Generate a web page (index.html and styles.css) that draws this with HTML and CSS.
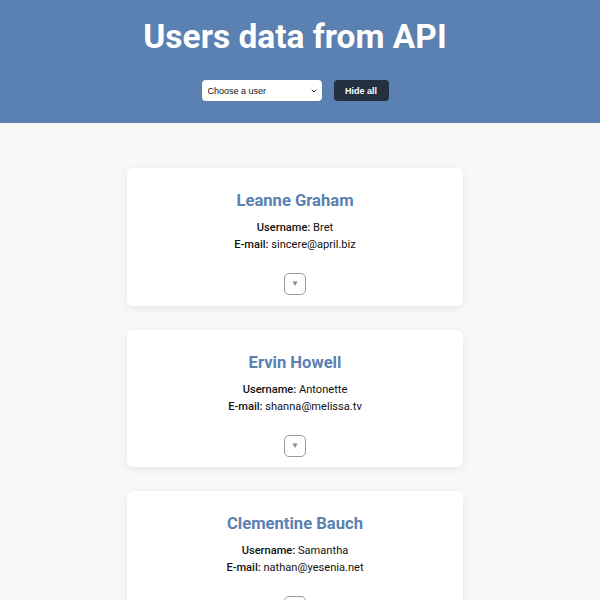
FILE: index.html
```html
<!DOCTYPE html>
<html>
<head>
<meta charset="utf-8">
<link rel="stylesheet" href="styles.css">
</head>
<body>
<header class="header">
  <h1 class="title">Users data from API</h1>
  <div class="controls">
    <select class="select"><option>Choose a user</option></select>
    <button class="hide-btn">Hide all</button>
  </div>
</header>
<main class="list">
  <div class="card">
    <h2 class="name">Leanne Graham</h2>
    <p class="line"><b>Username:</b> Bret</p>
    <p class="line"><b>E-mail:</b> sincere@april.biz</p>
    <button class="toggle">&#9660;</button>
  </div>
  <div class="card">
    <h2 class="name">Ervin Howell</h2>
    <p class="line"><b>Username:</b> Antonette</p>
    <p class="line"><b>E-mail:</b> shanna@melissa.tv</p>
    <button class="toggle">&#9660;</button>
  </div>
  <div class="card">
    <h2 class="name">Clementine Bauch</h2>
    <p class="line"><b>Username:</b> Samantha</p>
    <p class="line"><b>E-mail:</b> nathan@yesenia.net</p>
    <button class="toggle">&#9660;</button>
  </div>
</main>
</body>
</html>
```
FILE: styles.css
```css
* { box-sizing: border-box; }
html, body { height: 600px; overflow: hidden; }
body {
  margin: 0;
  background: #f8f8f8;
  font-family: Roboto, "Liberation Sans", sans-serif;
  color: #111;
}
.header {
  background: #5b80b2;
  height: 123px;
  padding-top: 15px;
  padding-right: 10px;
  display: flex;
  flex-direction: column;
  align-items: center;
}
.title {
  margin: 0;
  color: #fff;
  font-size: 33.5px;
  font-weight: 700;
  line-height: 44px;
}
.controls {
  margin-top: 21px;
  display: flex;
  gap: 12px;
  align-items: center;
}
.select {
  -webkit-appearance: none;
  appearance: none;
  width: 120px;
  height: 21px;
  border: none;
  border-radius: 4px;
  background: #fff url("data:image/svg+xml,%3Csvg xmlns='http://www.w3.org/2000/svg' width='6' height='4' viewBox='0 0 6 4'%3E%3Cpath d='M0.7 0.7 L3 3 L5.3 0.7' fill='none' stroke='%23333' stroke-width='1'/%3E%3C/svg%3E") no-repeat right 5px center;
  font-family: "Liberation Sans", Arial, sans-serif;
  font-size: 9px;
  padding: 0 6px;
  color: #111;
}
.hide-btn {
  width: 55px;
  height: 21px;
  border: none;
  border-radius: 4px;
  background: #243040;
  color: #fff;
  font-family: "Liberation Sans", Arial, sans-serif;
  font-size: 9px;
  font-weight: 700;
  padding: 0;
}
.list {
  display: flex;
  flex-direction: column;
  align-items: center;
  gap: 24px;
  padding-top: 45px;
  padding-right: 10px;
}
.card {
  width: 336px;
  height: 137.5px;
  flex-shrink: 0;
  background: #fff;
  border-radius: 6px;
  box-shadow: 0 2px 8px rgba(0,0,0,0.08);
  display: flex;
  flex-direction: column;
  align-items: center;
  padding-top: 22px;
}
.name {
  margin: 0 0 7px;
  color: #5b80b2;
  font-size: 16.6px;
  font-weight: 700;
  line-height: 22px;
}
.line {
  margin: 0;
  font-size: 11.1px;
  line-height: 17px;
}
.line b { font-weight: 500; }
.toggle {
  margin-top: 20px;
  width: 22px;
  height: 22px;
  border: 1px solid #999;
  border-radius: 5px;
  background: #fff;
  color: #888;
  font-size: 8px;
  padding: 0;
  line-height: 20px;
}
```
